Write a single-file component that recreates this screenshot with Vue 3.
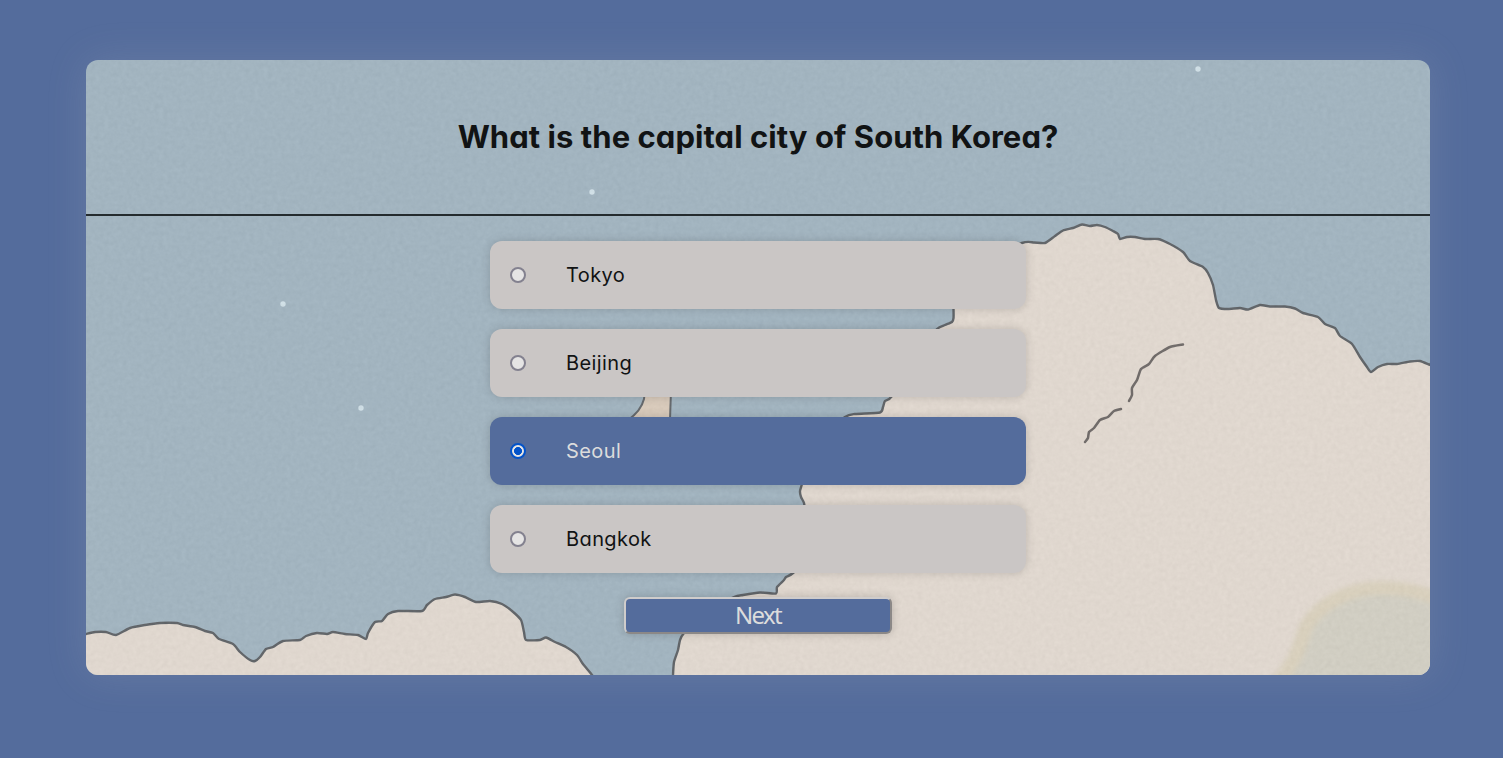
<script setup>
import { ref } from 'vue'

const question = 'What is the capital city of South Korea?'
const options = ['Tokyo', 'Beijing', 'Seoul', 'Bangkok']
const selected = ref('Seoul')

const stars = [
  [592, 192],
  [283, 304],
  [361, 408],
  [1198, 69],
]

// Turns a list of "x y" pairs into a softly rounded path (Catmull-Rom spline).
function curve(source, close = false) {
  const n = source.trim().split(/\s+/).map(Number)
  const p = []
  for (let i = 0; i < n.length; i += 2) p.push([n[i], n[i + 1]])
  let d = `M${p[0][0]} ${p[0][1]}`
  for (let i = 0; i < p.length - 1; i++) {
    const a = p[i - 1] || p[i]
    const b = p[i]
    const c = p[i + 1]
    const e = p[i + 2] || c
    const k = 10
    d += ` C${b[0] + (c[0] - a[0]) / k} ${b[1] + (c[1] - a[1]) / k} ${c[0] - (e[0] - b[0]) / k} ${c[1] - (e[1] - b[1]) / k} ${c[0]} ${c[1]}`
  }
  return close ? d + ' Z' : d
}

const leftCloud = curve(
  `82 682 82 635 86 634 95 632 106 632 116 635 130 628 145 625 160 623 177 623 183 625 195 627 205 631 213 633
  219 639 233 644 240 652 250 660 255 661 260 657 266 649 273 647 283 641 300 640 306 636 317 633 327 634 333 632
  345 634 358 635 366 639 368 633 375 622 382 621 388 614 398 611 422 611 427 605 435 599 446 597 455 594.5 465 597
  476 602 490 601 502 604 512 611 521 620 524 632 526 640 540 640 546 637.5 555 642 566 647 577 655 583 664 592 675
  596 682`,
  true,
)
const rightCloud = curve(
  `673 682 673 675 674 662 678 650 680 640 684 633 704 612 734 597 743 595 760 592.5 776 593.5 777 587 784 580
  786 577 793 573 815 550 806 515 804 503 801 497 800 491 802 484 815 440 845 417 855 414 880 412.5 883 407 885 401
  892 396 920 350 937 329 945 325 952 322 953.5 318 953.5 309 953 300 970 265 1022 243 1034 242.5 1045 243 1055 236
  1063 230.5 1073 228 1082 224.5 1090 226 1097 225 1105 227 1113 231 1118 234 1120 239 1127 237 1135 237 1145 239
  1158 239 1170 244 1183 252 1190 261 1203 267 1208 273 1213 285 1216 300 1219 308 1228 309 1240 308 1248 309.5
  1260 305 1270 306.5 1285 306.5 1295 308.5 1303 313 1318 317 1325 324 1335 328 1340 336 1352 344 1360 357 1367 367
  1371 372 1378 367 1387 364 1397 364 1410 361.5 1420 361 1430 365 1436 367 1436 682`,
  true,
)
const creases = [
  curve('1183 344.5 1170 347 1155 356 1149 364 1141 369 1137 380 1132 388 1132 395 1129 401'),
  curve('1121 409 1114 411 1108 417 1100 420 1094 428 1089 432 1088 438 1085 442'),
]
</script>

<template>
  <main class="page">
    <section class="card">
      <svg class="scene" viewBox="86 60 1344 615" preserveAspectRatio="none" aria-hidden="true">
        <defs>
          <filter id="grain" x="0" y="0" width="100%" height="100%" color-interpolation-filters="sRGB">
            <feTurbulence type="fractalNoise" baseFrequency="0.22" numOctaves="3" seed="4" />
            <feColorMatrix type="matrix" values="0.5 0.5 0 0 0.08  0.5 0.5 0 0 0.08  0.5 0.5 0 0 0.08  0 0 0 0 0.055" />
          </filter>
          <filter id="soft" x="-20%" y="-20%" width="140%" height="140%">
            <feGaussianBlur stdDeviation="2.5" />
          </filter>
        </defs>
        <rect class="sky" x="86" y="60" width="1344" height="615" />
        <circle v-for="s in stars" :key="s[0]" class="star" :cx="s[0]" :cy="s[1]" r="2.7" />
        <path class="arm" d="M645 390 L644 399 Q641 411 628 420 L670 420 L671 390 Z" />
        <path class="cloud" :d="leftCloud" />
        <path class="cloud" :d="rightCloud" />
        <path
          class="hill"
          filter="url(#soft)"
          d="M1270 690 C1298 664 1300 642 1307 625 C1322 602 1350 589 1378 588 C1404 587 1421 593 1440 599 L1440 690 Z"
        />
        <path v-for="c in creases" :key="c" class="crease" :d="c" />
        <rect x="86" y="60" width="1344" height="615" filter="url(#grain)" />
      </svg>

      <header class="head">
        <h1 class="question">{{ question }}</h1>
      </header>

      <form class="body" @submit.prevent>
        <label v-for="o in options" :key="o" class="option" :class="{ active: selected === o }">
          <input v-model="selected" class="radio" type="radio" name="answer" :value="o" />
          <span class="text">{{ o }}</span>
        </label>
        <button class="next" type="submit">Next</button>
      </form>
    </section>
  </main>
</template>

<style>
body {
  margin: 0;
  background: #546c9c;
}
</style>

<style scoped>
.page {
  box-sizing: border-box;
  height: 758px;
  padding: 60px 73px 83px 86px;
  background: #546c9c;
  overflow: hidden;
}
.card {
  position: relative;
  height: 615px;
  border-radius: 12px;
  box-shadow: 0 0 40px rgba(202, 198, 197, 0.16);
  color: #111314;
  font-family: Inter, 'Open Sans', sans-serif;
  font-feature-settings: 'cv11';
}
.scene {
  position: absolute;
  inset: 0;
  width: 100%;
  height: 100%;
  border-radius: 12px;
  overflow: hidden;
}
.sky {
  fill: #a3b6c2;
}
.star {
  fill: #d3e3ea;
}
.arm {
  fill: #dccdbd;
  stroke: #63676b;
  stroke-width: 2;
}
.cloud {
  fill: #e4dbd2;
  stroke: #5f6367;
  stroke-width: 2.4;
  stroke-linejoin: round;
}
.hill {
  fill: #d4d1c5;
  stroke: #dcd3bf;
  stroke-width: 14;
}
.crease {
  fill: none;
  stroke: #6f6a68;
  stroke-width: 2.5;
  stroke-linecap: round;
  stroke-linejoin: round;
}
.head {
  position: relative;
  box-sizing: border-box;
  display: flex;
  align-items: center;
  justify-content: center;
  height: 156px;
  border-bottom: 2px solid #242b2e;
}
.question {
  margin: 0;
  font-size: 31px;
  font-weight: 700;
  line-height: 48px;
  letter-spacing: 0.05px;
  white-space: nowrap;
}
.body {
  position: relative;
  display: flex;
  flex-direction: column;
  align-items: center;
  gap: 20px;
  padding-top: 25px;
}
.option {
  box-sizing: border-box;
  display: flex;
  align-items: center;
  gap: 40px;
  width: 536px;
  height: 68px;
  padding: 0 20px;
  border-radius: 12px;
  background: #cac6c5;
  box-shadow: 0 0 10px rgba(0, 0, 0, 0.16);
  font-size: 20px;
  letter-spacing: 0.4px;
}
.option.active {
  background: #546c9c;
  color: #dcdcdc;
}
.radio {
  appearance: none;
  box-sizing: border-box;
  width: 16px;
  height: 16px;
  margin: 0;
  border: 2px solid #83818f;
  border-radius: 50%;
  background: #e5e4e4;
}
.radio:checked {
  border-color: #0353c9;
  background: radial-gradient(circle, #0353c9 3.7px, #e5e4e4 4.3px);
}
.next {
  box-sizing: border-box;
  width: 268px;
  height: 37px;
  margin-top: 4px;
  padding: 0 0 2px;
  border: 2px solid;
  border-color: #cfcccb #8b8887 #8b8887 #cfcccb;
  border-radius: 6px;
  background: #546c9c;
  box-shadow: 0 0 10px rgba(0, 0, 0, 0.18);
  color: #dcdcdc;
  font-family: 'Noto Sans', sans-serif;
  font-size: 24px;
  line-height: 31px;
  letter-spacing: -1.7px;
}
</style>
